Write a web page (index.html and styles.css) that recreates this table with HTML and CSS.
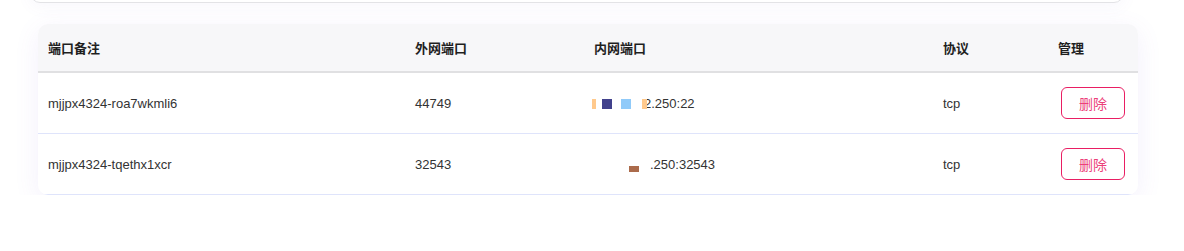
FILE: index.html
```html
<!DOCTYPE html>
<html lang="zh-CN">
<head>
<meta charset="utf-8">
<title>端口列表</title>
<link rel="stylesheet" href="styles.css">
</head>
<body>
<div class="top-card"></div>
<div class="card">
  <table class="ports">
    <colgroup>
      <col class="c-name"><col class="c-ext"><col class="c-int"><col class="c-proto"><col class="c-act">
    </colgroup>
    <thead>
      <tr><th>端口备注</th><th>外网端口</th><th>内网端口</th><th>协议</th><th>管理</th></tr>
    </thead>
    <tbody>
      <tr>
        <td>mjjpx4324-roa7wkmli6</td>
        <td>44749</td>
        <td><span class="blk b-or1"></span><span class="blk b-navy"></span><span class="blk b-blue"></span><span class="blk b-or2"></span><span class="ip1">2.250:22</span></td>
        <td>tcp</td>
        <td><button class="del">删除</button></td>
      </tr>
      <tr>
        <td>mjjpx4324-tqethx1xcr</td>
        <td>32543</td>
        <td><span class="blk b-brown"></span><span class="ip2">.250:32543</span></td>
        <td>tcp</td>
        <td><button class="del">删除</button></td>
      </tr>
    </tbody>
  </table>
</div>
</body>
</html>
```
FILE: styles.css
```css
html, body {
  margin: 0;
  padding: 0;
  background: #fff;
  font-family: "Liberation Sans", "Noto Sans CJK SC", Arial, sans-serif;
}

.top-card {
  margin: -39px 0 0 30px;
  width: 1092px;
  height: 40px;
  border: 1px solid #e3e3e6;
  border-radius: 10px;
  box-shadow: 0 4px 16px rgba(120, 100, 200, 0.05);
}

.card {
  margin: 21px 0 0 38px;
  width: 1100px;
  border-radius: 10px;
  overflow: hidden;
  background: #fff;
  box-shadow: 0 6px 26px rgba(120, 90, 220, 0.09);
}

.ports {
  width: 100%;
  border-collapse: collapse;
  table-layout: fixed;
}

.c-name { width: 367px; }
.c-ext { width: 179px; }
.c-int { width: 349px; }
.c-proto { width: 115px; }
.c-act { width: 90px; }

.ports th {
  height: 47px;
  padding: 0 10px;
  background: #f7f7f9;
  border-bottom: 2px solid #e0e0e2;
  text-align: left;
  font-size: 13px;
  font-weight: bold;
  color: #1f1f1f;
}

.ports td {
  height: 60px;
  padding: 0 10px;
  border-bottom: 1px solid #dfe4fb;
  font-size: 13px;
  color: #333;
}

.blk {
  display: inline-block;
  vertical-align: -1px;
}

.b-or1 { width: 4px; height: 10px; margin-left: -2px; background: #ffc98c; }
.b-navy { width: 10px; height: 10px; margin-left: 6px; background: #41418c; }
.b-blue { width: 10px; height: 10px; margin-left: 9px; background: #90caf9; }
.b-or2 { width: 5px; height: 10px; margin-left: 11px; background: #ffc98c; position: relative; z-index: 1; }
.ip1 { margin-left: -3px; }

.b-brown { width: 10px; height: 6px; margin-left: 35px; vertical-align: -3px; background: #ab6b4b; }
.ip2 { margin-left: 11px; }

.del {
  margin-left: 3px;
  width: 64px;
  height: 32px;
  padding: 0;
  border: 1px solid #e91e63;
  border-radius: 6px;
  background: #fff;
  color: #ec407a;
  font-family: "Noto Sans CJK SC", sans-serif;
  font-size: 14px;
  vertical-align: middle;
  cursor: pointer;
}
```
